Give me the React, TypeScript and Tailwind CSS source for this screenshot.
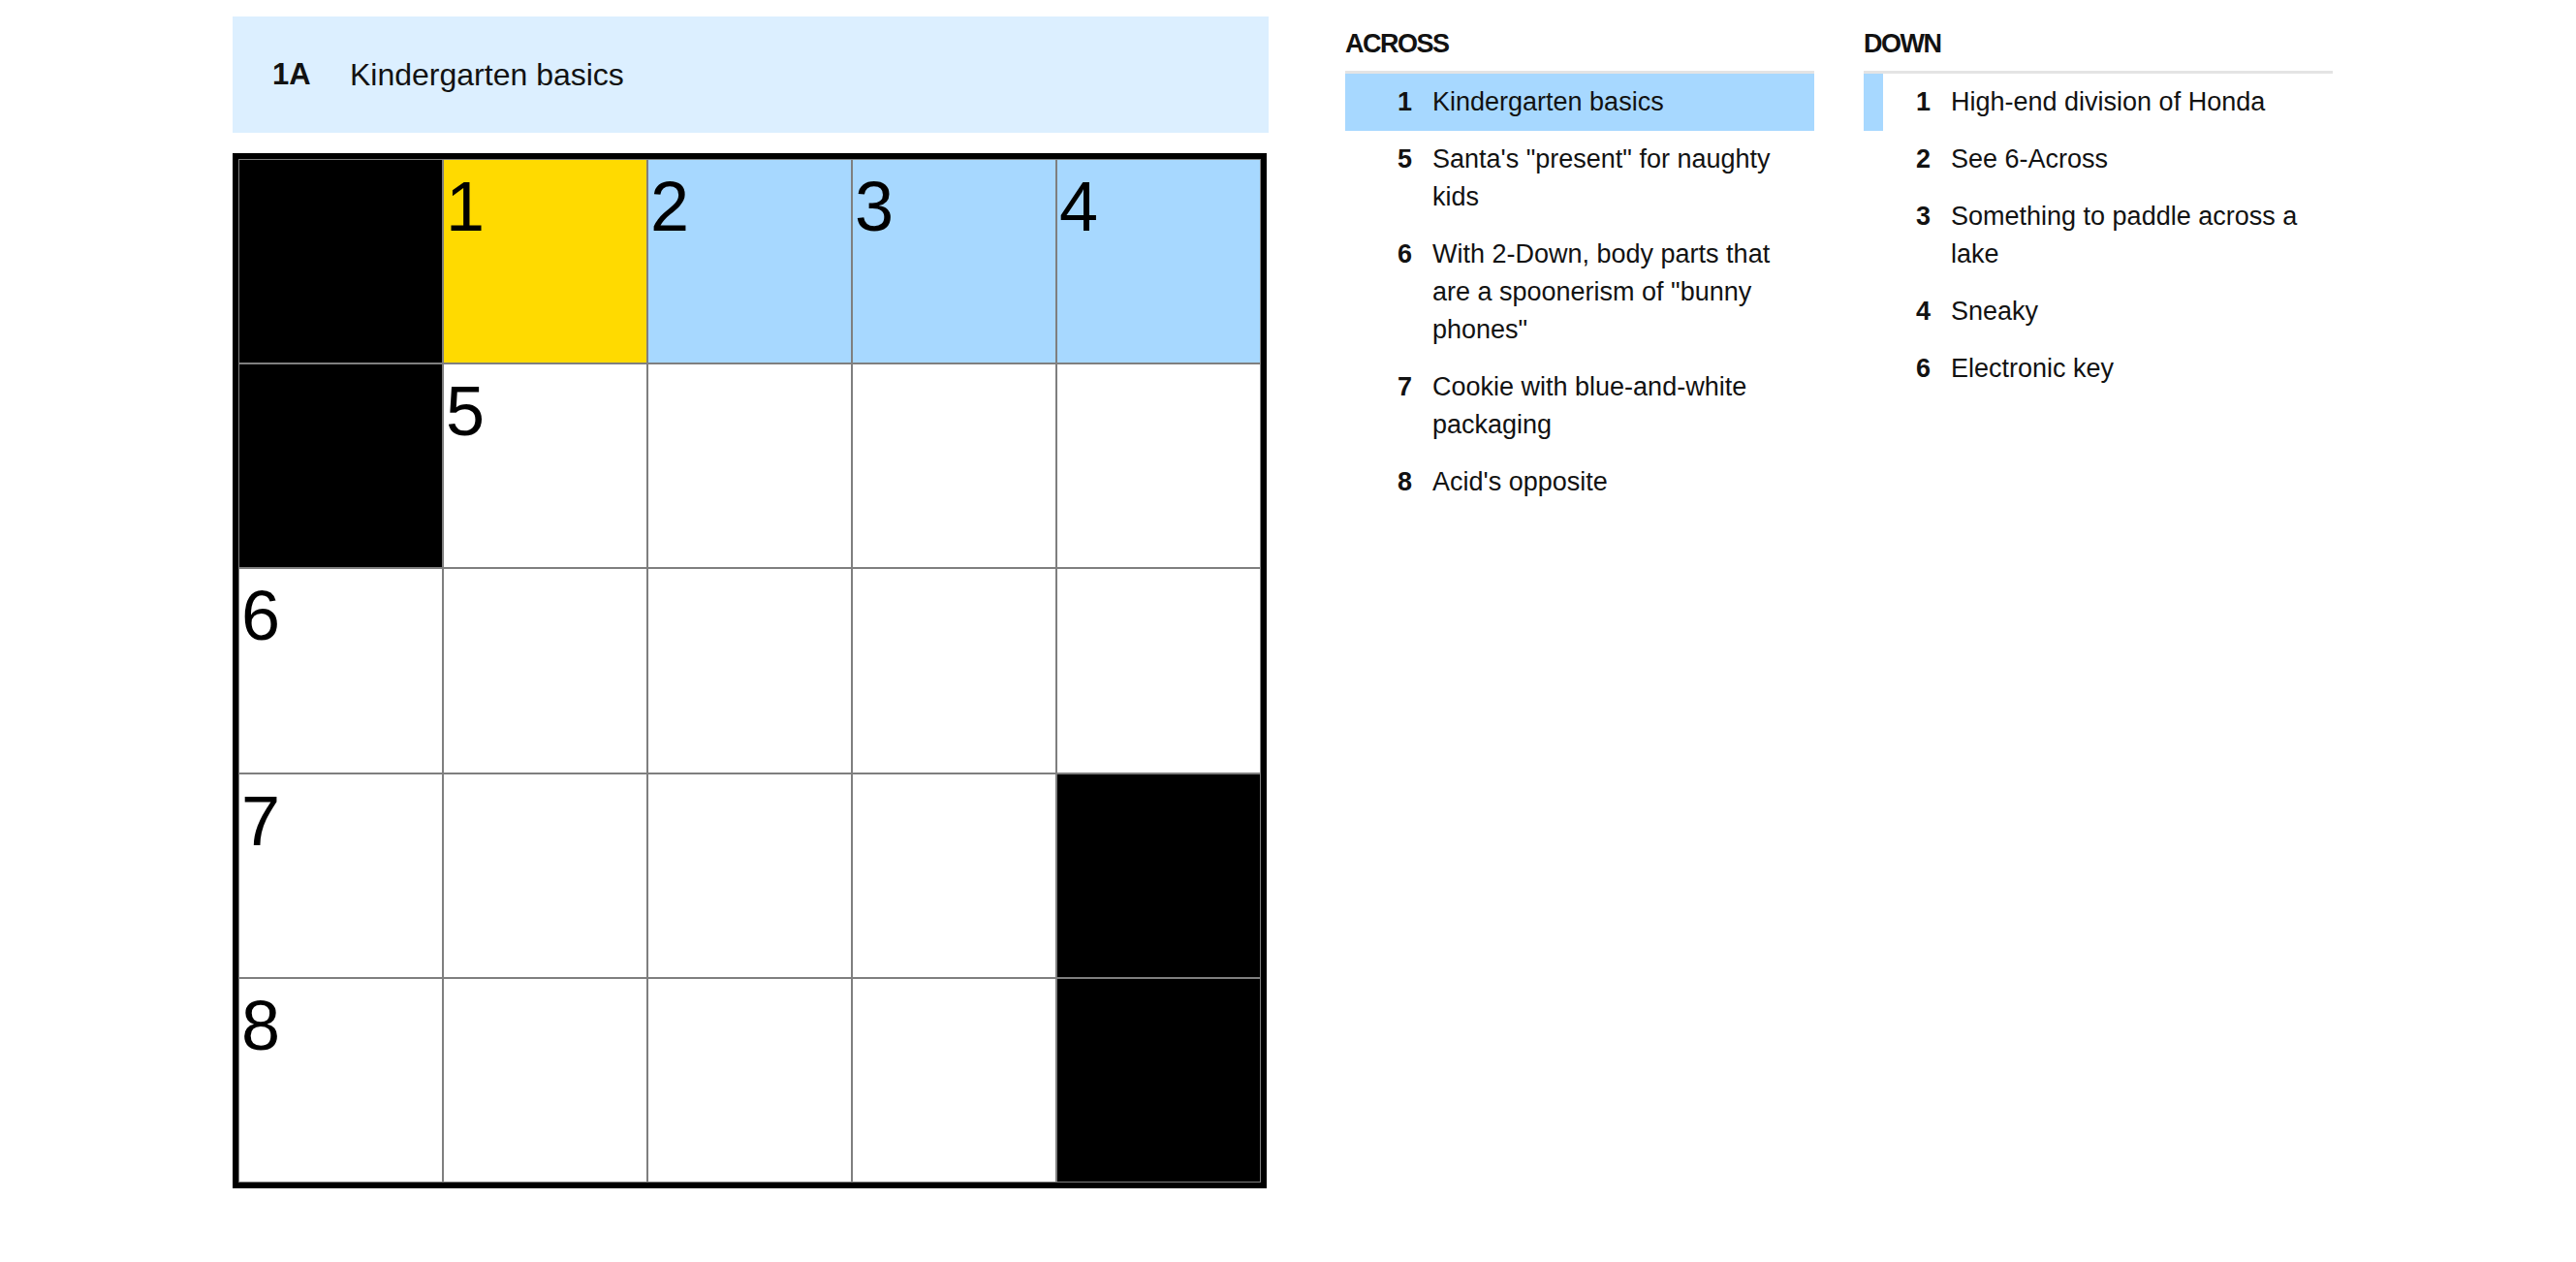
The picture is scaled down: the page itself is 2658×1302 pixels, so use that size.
import React from "react";

type Cell = { b?: boolean; n?: number; c?: "y" | "h" };

const grid: Cell[][] = [
  [{ b: true }, { n: 1, c: "y" }, { n: 2, c: "h" }, { n: 3, c: "h" }, { n: 4, c: "h" }],
  [{ b: true }, { n: 5 }, {}, {}, {}],
  [{ n: 6 }, {}, {}, {}, {}],
  [{ n: 7 }, {}, {}, {}, { b: true }],
  [{ n: 8 }, {}, {}, {}, { b: true }],
];

const across = [
  { n: 1, t: "Kindergarten basics", active: true },
  { n: 5, t: 'Santa\'s "present" for naughty kids' },
  { n: 6, t: 'With 2-Down, body parts that are a spoonerism of "bunny phones"' },
  { n: 7, t: "Cookie with blue-and-white packaging" },
  { n: 8, t: "Acid's opposite" },
];

const down = [
  { n: 1, t: "High-end division of Honda", related: true },
  { n: 2, t: "See 6-Across" },
  { n: 3, t: "Something to paddle across a lake" },
  { n: 4, t: "Sneaky" },
  { n: 6, t: "Electronic key" },
];

function cellClass(c: Cell) {
  if (c.b) return "bg-black";
  if (c.c === "y") return "bg-[#ffda00]";
  if (c.c === "h") return "bg-[#a7d8ff]";
  return "bg-white";
}

function ClueList({
  title,
  items,
}: {
  title: string;
  items: { n: number; t: string; active?: boolean; related?: boolean }[];
}) {
  return (
    <div className="w-[484px] flex flex-col">
      <div className="h-[59px] flex items-center border-b-[3px] border-[#e4e4e4] text-[27px] font-bold text-[#121212] tracking-[-1.5px]">
        {title}
      </div>
      <ul className="flex flex-col">
        {items.map((it) => (
          <li
            key={it.n}
            className={
              "flex py-[10px] text-[27px] leading-[39px] text-[#121212] " +
              (it.active ? "bg-[#a7d8ff]" : "")
            }
          >
            <div className={"w-[20px] shrink-0 -my-[10px] " + (it.related ? "bg-[#a7d8ff]" : "")} />
            <div className="w-[49px] shrink-0 text-right font-bold">{it.n}</div>
            <div className="ml-[21px] w-[378px]">{it.t}</div>
          </li>
        ))}
      </ul>
    </div>
  );
}

export default function App() {
  return (
    <div
      className="w-[2658px] h-[1302px] bg-white flex pl-[240px] pt-[17px]"
      style={{ fontFamily: '"Liberation Sans", Arial, sans-serif' }}
    >
      <div className="flex flex-col w-[1068px]">
        <div className="h-[120px] w-[1069px] bg-[#dcefff] flex items-center pl-[41px] text-[#121212]">
          <span className="text-[31px] font-bold w-[80px]">1A</span>
          <span className="text-[32px]">Kindergarten basics</span>
        </div>
        <div className="mt-[21px] w-[1067px] h-[1068px] border-[6px] border-black bg-[#7f7f7f] p-px grid grid-cols-5 grid-rows-5 gap-[2px]">
          {grid.flat().map((c, i) => (
            <div key={i} className={cellClass(c) + " relative overflow-hidden"}>
              {c.n !== undefined && (
                <div className="pl-[2px] pt-[12px] text-[72px] leading-[72px] text-black">{c.n}</div>
              )}
            </div>
          ))}
        </div>
      </div>
      <div className="ml-[80px] flex gap-[51px]">
        <ClueList title="ACROSS" items={across} />
        <ClueList title="DOWN" items={down} />
      </div>
    </div>
  );
}
